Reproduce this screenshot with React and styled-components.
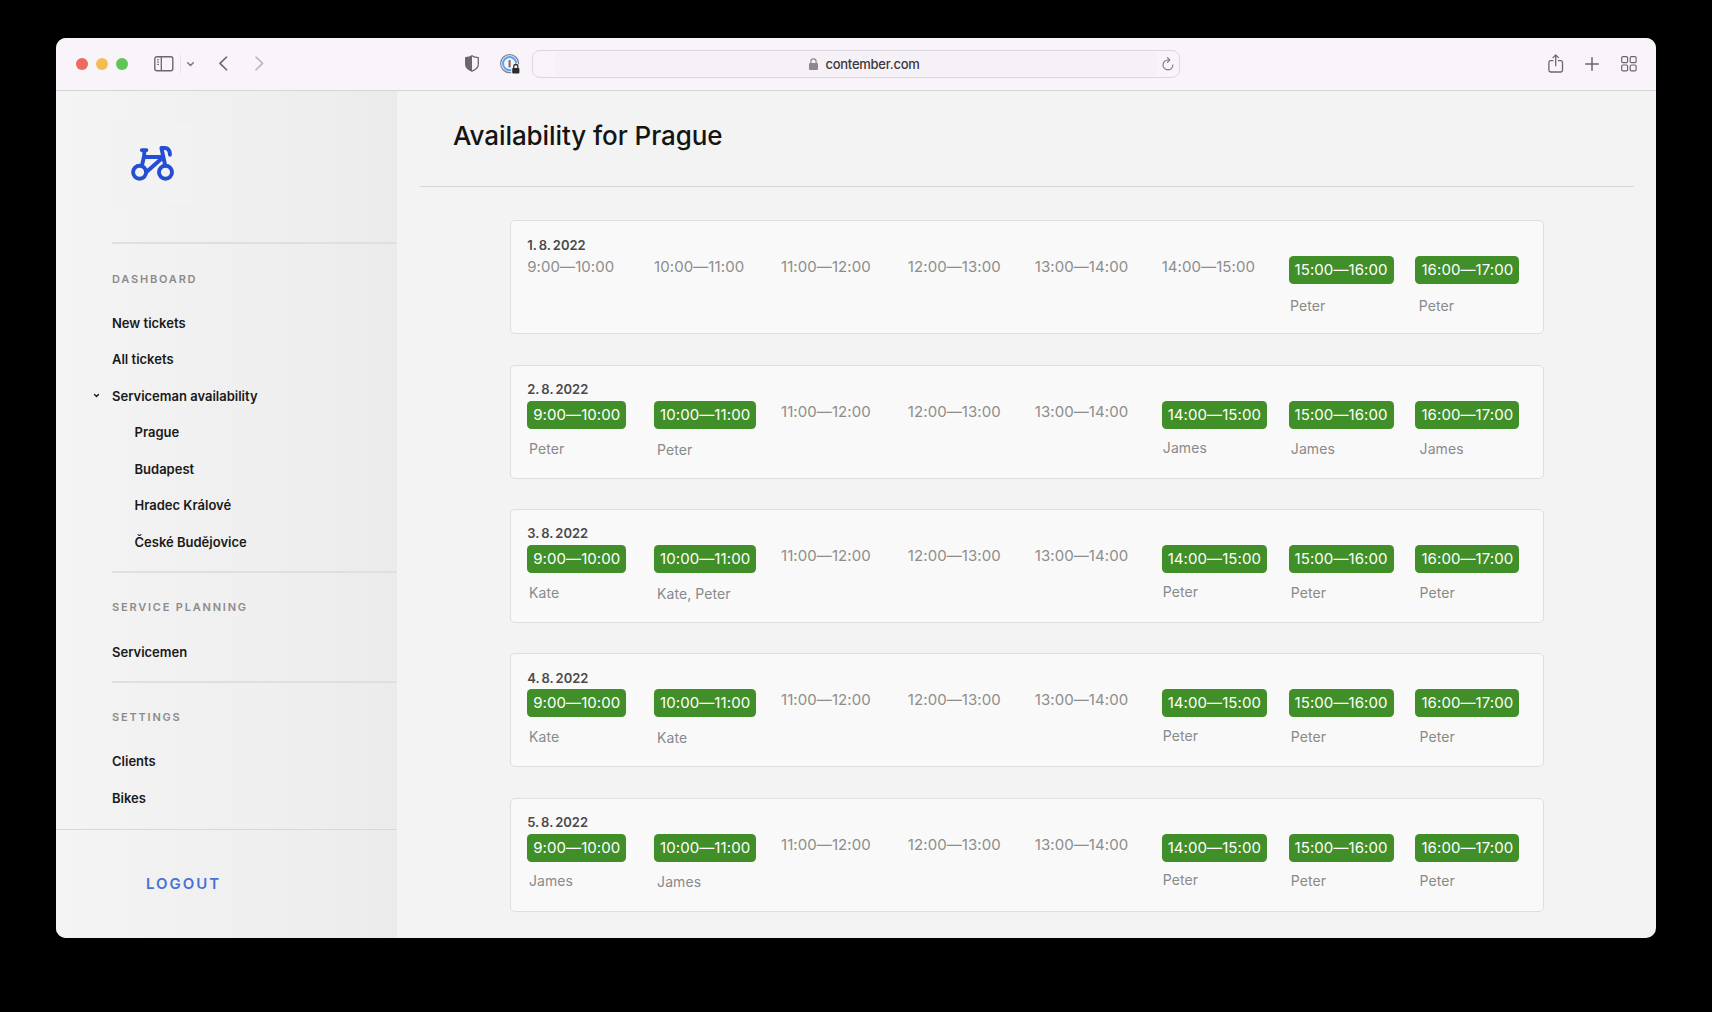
import React from "react";
import styled, { createGlobalStyle } from "styled-components";

const GlobalStyle = createGlobalStyle`
  * { box-sizing: border-box; }
  html, body { margin: 0; background: #000; }
  body { font-family: Inter, "Liberation Sans", sans-serif; -webkit-font-smoothing: antialiased; }
  svg { display: block; flex: none; overflow: visible; }
`;

const Desktop = styled.div`
  width: 1712px;
  height: 1012px;
  padding: 38px 56px 74px;
  background: #000;
  overflow: hidden;
`;

const BrowserWindow = styled.div`
  display: flex;
  flex-direction: column;
  width: 1600px;
  height: 900px;
  border-radius: 10px;
  overflow: hidden;
  background: #f3f3f3;
`;

const Toolbar = styled.header`
  display: flex;
  align-items: center;
  flex: none;
  height: 53px;
  padding: 0 19px 0 20px;
  background: #f8f4f9;
  border-bottom: 1px solid #d6d4d7;
`;

const TrafficLights = styled.div`
  display: flex;
  gap: 8px;
`;

const Light = styled.span`
  width: 12px;
  height: 12px;
  border-radius: 50%;
  background: ${(p) => p.$color};
`;

const ToolButton = styled.span`
  display: flex;
  margin-left: ${(p) => p.$gap}px;
  padding-bottom: ${(p) => p.$lift || 0}px;
  color: ${(p) => p.$color || "#6b666d"};
`;

const ToolSeparator = styled.span`
  width: 1px;
  height: 18px;
  margin-left: 6px;
  background: #e6e2e7;
`;

const AddressBar = styled.div`
  display: flex;
  align-items: center;
  width: 648px;
  height: 28px;
  margin-left: 12px;
  padding: 0 5px 0 22px;
  border: 1px solid #dad6dc;
  border-radius: 8px;
`;

const AddressField = styled.div`
  display: flex;
  align-items: center;
  justify-content: center;
  gap: 7px;
  flex: 1;
  height: 24px;
  padding-left: 17px;
  background: #f5f1f6;
  color: #3b383c;
  font-size: 13px;
  font-weight: 500;
  letter-spacing: -0.25px;
`;

const ReloadSlot = styled.span`
  display: flex;
  margin-left: 5px;
  padding-bottom: 1px;
  color: #7b767d;
`;

const ToolbarEnd = styled.div`
  display: flex;
  align-items: center;
  margin-left: auto;
`;

const Body = styled.div`
  display: flex;
  flex: 1;
  min-height: 0;
`;

const Sidebar = styled.aside`
  display: flex;
  flex-direction: column;
  flex: none;
  width: 341px;
  background: linear-gradient(90deg, #f4f4f4 0%, #f1f1f1 35%, #eeeeee 75%, #ebebeb 100%);
`;

const LogoArea = styled.div`
  height: 151px;
  padding: 32px 0 0 56px;
`;

const LogoTile = styled.div`
  display: flex;
  width: 81px;
  height: 81px;
  background: #f2f2f2;
  color: #244fd3;
`;

const Section = styled.section`
  margin-left: 56px;
  padding: 16.6px 0 10.85px;
  border-top: 2px solid #dfdfdf;
`;

const SectionTitle = styled.h2`
  margin: 0 0 7.3px;
  font-size: 11px;
  font-weight: 600;
  line-height: 36.57px;
  letter-spacing: 1.8px;
  color: #8b8b8b;
`;

const NavItem = styled.a`
  display: flex;
  align-items: center;
  height: 36.5px;
  margin-left: ${(p) => (p.$expandable ? -18 : 0)}px;
  padding-left: ${(p) => (p.$nested ? 22.5 : 0)}px;
  gap: 13px;
  font-size: 13px;
  font-weight: 600;
  color: #1a1a1a;
  white-space: nowrap;
`;

const SidebarFooter = styled.footer`
  flex: 1;
  margin-top: 2px;
  padding: 40px 0 0 90px;
  border-top: 1px solid #d8d8d8;
`;

const Logout = styled.a`
  font-size: 15px;
  font-weight: 600;
  line-height: 28px;
  letter-spacing: 1.95px;
  color: #4a70da;
`;

const Main = styled.main`
  flex: 1;
  padding: 0 22px 0 23px;
`;

const PageHeader = styled.div`
  height: 96px;
  padding: 24px 0 0 33px;
  border-bottom: 1px solid #d6d6d6;
`;

const PageTitle = styled.h1`
  margin: 0;
  font-size: 26px;
  font-weight: 500;
  line-height: 42px;
  letter-spacing: -0.08px;
  color: #141414;
`;

const DayList = styled.div`
  display: flex;
  flex-direction: column;
  gap: 30.3px;
  width: 1034px;
  margin: 33.4px 0 0 90px;
`;

const DayCard = styled.article`
  height: 114px;
  padding: 14.4px 0 0 16.2px;
  border: 1px solid #dedede;
  border-radius: 5px;
  background: #f9f9f9;
`;

const DayDate = styled.h3`
  margin: 0;
  font-size: 13px;
  font-weight: 600;
  line-height: 18px;
  word-spacing: -1.1px;
  color: #4a4a4a;
`;

const SlotRow = styled.div`
  display: grid;
  grid-template-columns: repeat(8, 126.9px);
  margin-top: 2.7px;
`;

const Slot = styled.div`
  display: flex;
  flex-direction: column;
  align-items: flex-start;
`;

const FreeTime = styled.span`
  font-size: 15px;
  line-height: 22px;
  letter-spacing: 0.08px;
  color: #8d8d8d;
  white-space: nowrap;
`;

const BookedTime = styled.span`
  padding: 0 6px;
  border-radius: 4.5px;
  background: #408f29;
  font-size: 15px;
  line-height: 28px;
  letter-spacing: 0.08px;
  color: #fff;
  white-space: nowrap;
`;

const Person = styled.span`
  margin: ${(p) => p.$top}px 0 0 ${(p) => p.$left}px;
  font-size: 14px;
  line-height: 18px;
  letter-spacing: 0.07px;
  color: #8a8a8a;
`;

const HOURS = [
  "9:00—10:00", "10:00—11:00", "11:00—12:00", "12:00—13:00",
  "13:00—14:00", "14:00—15:00", "15:00—16:00", "16:00—17:00",
];

const DAYS = [
  { date: "1. 8. 2022", shift: [-0.8, 1.3], people: [null, null, null, null, null, null, "Peter", "Peter"] },
  { date: "2. 8. 2022", shift: [0, 0.3], people: ["Peter", "Peter", null, null, null, "James", "James", "James"] },
  { date: "3. 8. 2022", shift: [0, -0.5], people: ["Kate", "Kate, Peter", null, null, null, "Peter", "Peter", "Peter"] },
  { date: "4. 8. 2022", shift: [0, -0.7], people: ["Kate", "Kate", null, null, null, "Peter", "Peter", "Peter"] },
  { date: "5. 8. 2022", shift: [0, -0.8], people: ["James", "James", null, null, null, "Peter", "Peter", "Peter"] },
];

const NAME_LEFT = [1.8, 3, 0, 0, 0, 1.2, 2.3, 4.2];
const NAME_TOP = [11, 12, 11, 11, 11, 10, 11, 11];

const SidebarIcon = () => (
  <svg width="20" height="16" viewBox="0 0 20 16" fill="none" stroke="currentColor">
    <rect x="0.8" y="0.8" width="18" height="14" rx="2" strokeWidth="1.4" />
    <path d="M7.3 1v13.6" strokeWidth="1.3" />
    <path d="M3 3.8h2M3 6.1h2M3 8.4h2" strokeWidth="1" />
  </svg>
);

const ChevronDown = ({ size = 7, weight = 1.5 }) => (
  <svg width={size} height={size * 0.6} viewBox="0 0 10 6" fill="none" stroke="currentColor"
    strokeWidth={(weight * 10) / size} strokeLinecap="round" strokeLinejoin="round">
    <path d="M1 1l4 4 4-4" />
  </svg>
);

const Back = () => (
  <svg width="9" height="15" viewBox="0 0 9 15" fill="none" stroke="currentColor" strokeWidth="1.6" strokeLinecap="round" strokeLinejoin="round">
    <path d="M7.6 1L1 7.4l6.6 6.4" />
  </svg>
);

const Forward = () => (
  <svg width="9" height="15" viewBox="0 0 9 15" fill="none" stroke="currentColor" strokeWidth="1.6" strokeLinecap="round" strokeLinejoin="round">
    <path d="M1 1l6.6 6.4L1 13.8" />
  </svg>
);

const Shield = () => (
  <svg width="14" height="17" viewBox="0 0 14 17">
    <path d="M7 .7C5.400 1.900 3 2.500.7 2.700V9.500c0 3.200 3.600 5.500 6.300 6.700 2.700-1.200 6.300-3.500 6.300-6.700V2.700C11 2.500 8.600 1.900 7 .7z" fill="none" stroke="currentColor" strokeWidth="1.3" strokeLinejoin="round" />
    <path d="M7 .7C5.400 1.900 3 2.500.7 2.700V9.500c0 3.200 3.600 5.500 6.300 6.700z" fill="currentColor" />
  </svg>
);

const PasswordManager = () => (
  <svg width="20" height="20" viewBox="0 0 20 20" fill="none">
    <circle cx="9.600" cy="9.600" r="9" stroke="#858088" strokeWidth="1.200" />
    <circle cx="9.600" cy="9.600" r="6.600" stroke="#5aa3f7" strokeWidth="2" />
    <rect x="8.500" y="5.900" width="2.200" height="7.600" rx="0.800" fill="#77727a" />
    <path d="M11.200 20v-7.600l2-2.900h4.300l2.700 2.500V20z" fill="#f8f4f9" />
    <rect x="12.200" y="14" width="7.200" height="5.400" rx="0.800" fill="#2e2b2f" />
    <path d="M13.800 14v-1.500a2 2 0 0 1 4 0V14" stroke="#2e2b2f" strokeWidth="1.300" />
  </svg>
);

const Lock = () => (
  <svg width="9" height="12" viewBox="0 0 9 12">
    <rect x="0" y="5" width="9" height="7" rx="1" fill="#8d888f" />
    <path d="M1.900 5.500V3.400a2.600 2.600 0 0 1 5.200 0v2.100" fill="none" stroke="#8d888f" strokeWidth="1.200" />
  </svg>
);

const Reload = () => (
  <svg width="12" height="14" viewBox="0 0 12 14" fill="none" stroke="currentColor" strokeWidth="1.100" strokeLinecap="round" strokeLinejoin="round">
    <path d="M10.900 7.900A4.950 4.950 0 1 1 6 3h1.500" />
    <path d="M5.400.7l2.400 2.300-2.400 2.400" />
  </svg>
);

const Share = () => (
  <svg width="16" height="19" viewBox="0 0 16 19" fill="none" stroke="currentColor" strokeWidth="1.300" strokeLinecap="round" strokeLinejoin="round">
    <path d="M5 6.600H2.600A1.700 1.700 0 0 0 .9 8.300v8a1.700 1.700 0 0 0 1.700 1.700h10.200a1.700 1.700 0 0 0 1.700-1.700v-8a1.700 1.700 0 0 0-1.700-1.700h-2.400" />
    <path d="M7.700 11.700V1M5 3.600L7.700.9l2.700 2.700" />
  </svg>
);

const Plus = () => (
  <svg width="14" height="14" viewBox="0 0 14 14" stroke="currentColor" strokeWidth="1.500" strokeLinecap="round">
    <path d="M7 .7v12.600M.7 7h12.600" />
  </svg>
);

const TabGrid = () => (
  <svg width="16" height="16" viewBox="0 0 16 16" fill="none" stroke="currentColor" strokeWidth="1.200">
    <rect x="0.700" y="0.700" width="5.900" height="5.900" rx="1.200" />
    <rect x="9.200" y="0.700" width="5.900" height="5.900" rx="1.200" />
    <rect x="0.700" y="9" width="5.900" height="5.900" rx="1.200" />
    <rect x="9.200" y="9" width="5.900" height="5.900" rx="1.200" />
  </svg>
);

const BikeLogo = () => (
  <svg width="81" height="81" viewBox="112 123 81 81" fill="none" stroke="currentColor" strokeWidth="3.900" strokeLinecap="round" strokeLinejoin="round">
    <circle cx="139.600" cy="172.200" r="6.500" />
    <circle cx="165.500" cy="172.200" r="6.500" />
    <path d="M141.800 150.100h4.600M144.400 150.500l-.3 5.500-2.100 9.500M144.500 157h18M162 158.300l-15.300 13.500M165.200 165.500l-3.800-17.500h3.400c3.300 0 5 2.900 5.200 6.700" />
  </svg>
);

function App() {
  return (
    <>
      <GlobalStyle />
      <Desktop>
        <BrowserWindow>
          <Toolbar>
            <TrafficLights>
              <Light $color="#ec6a5e" />
              <Light $color="#f4be4f" />
              <Light $color="#61c554" />
            </TrafficLights>
            <ToolButton $gap={26} $lift={1}><SidebarIcon /></ToolButton>
            <ToolSeparator />
            <ToolButton $gap={6} $color="#7d787f"><ChevronDown size={7} weight={1.5} /></ToolButton>
            <ToolButton $gap={25} $lift={1}><Back /></ToolButton>
            <ToolButton $gap={27} $lift={1} $color="#bab5bc"><Forward /></ToolButton>
            <ToolButton $gap={201} $lift={1}><Shield /></ToolButton>
            <ToolButton $gap={21}><PasswordManager /></ToolButton>
            <AddressBar>
              <AddressField>
                <Lock />
                <span>contember.com</span>
              </AddressField>
              <ReloadSlot><Reload /></ReloadSlot>
            </AddressBar>
            <ToolbarEnd>
              <ToolButton $gap={0} $lift={2}><Share /></ToolButton>
              <ToolButton $gap={21} $lift={1}><Plus /></ToolButton>
              <ToolButton $gap={22} $lift={1}><TabGrid /></ToolButton>
            </ToolbarEnd>
          </Toolbar>
          <Body>
            <Sidebar>
              <LogoArea>
                <LogoTile><BikeLogo /></LogoTile>
              </LogoArea>
              <Section>
                <SectionTitle>DASHBOARD</SectionTitle>
                <NavItem>New tickets</NavItem>
                <NavItem>All tickets</NavItem>
                <NavItem $expandable>
                  <ChevronDown size={5} weight={1.4} />
                  Serviceman availability
                </NavItem>
                <NavItem $nested>Prague</NavItem>
                <NavItem $nested>Budapest</NavItem>
                <NavItem $nested>Hradec Králové</NavItem>
                <NavItem $nested>České Budějovice</NavItem>
              </Section>
              <Section>
                <SectionTitle>SERVICE PLANNING</SectionTitle>
                <NavItem>Servicemen</NavItem>
              </Section>
              <Section>
                <SectionTitle>SETTINGS</SectionTitle>
                <NavItem>Clients</NavItem>
                <NavItem>Bikes</NavItem>
              </Section>
              <SidebarFooter>
                <Logout>LOGOUT</Logout>
              </SidebarFooter>
            </Sidebar>
            <Main>
              <PageHeader>
                <PageTitle>Availability for Prague</PageTitle>
              </PageHeader>
              <DayList>
                {DAYS.map(({ date, shift, people }) => (
                  <DayCard key={date}>
                    <DayDate>{date}</DayDate>
                    <SlotRow>
                      {HOURS.map((hour, i) => (
                        <Slot key={hour}>
                          {people[i] ? (
                            <>
                              <BookedTime>{hour}</BookedTime>
                              <Person $left={NAME_LEFT[i] + shift[0]} $top={NAME_TOP[i] + shift[1]}>
                                {people[i]}
                              </Person>
                            </>
                          ) : (
                            <FreeTime>{hour}</FreeTime>
                          )}
                        </Slot>
                      ))}
                    </SlotRow>
                  </DayCard>
                ))}
              </DayList>
            </Main>
          </Body>
        </BrowserWindow>
      </Desktop>
    </>
  );
}

export default App;
